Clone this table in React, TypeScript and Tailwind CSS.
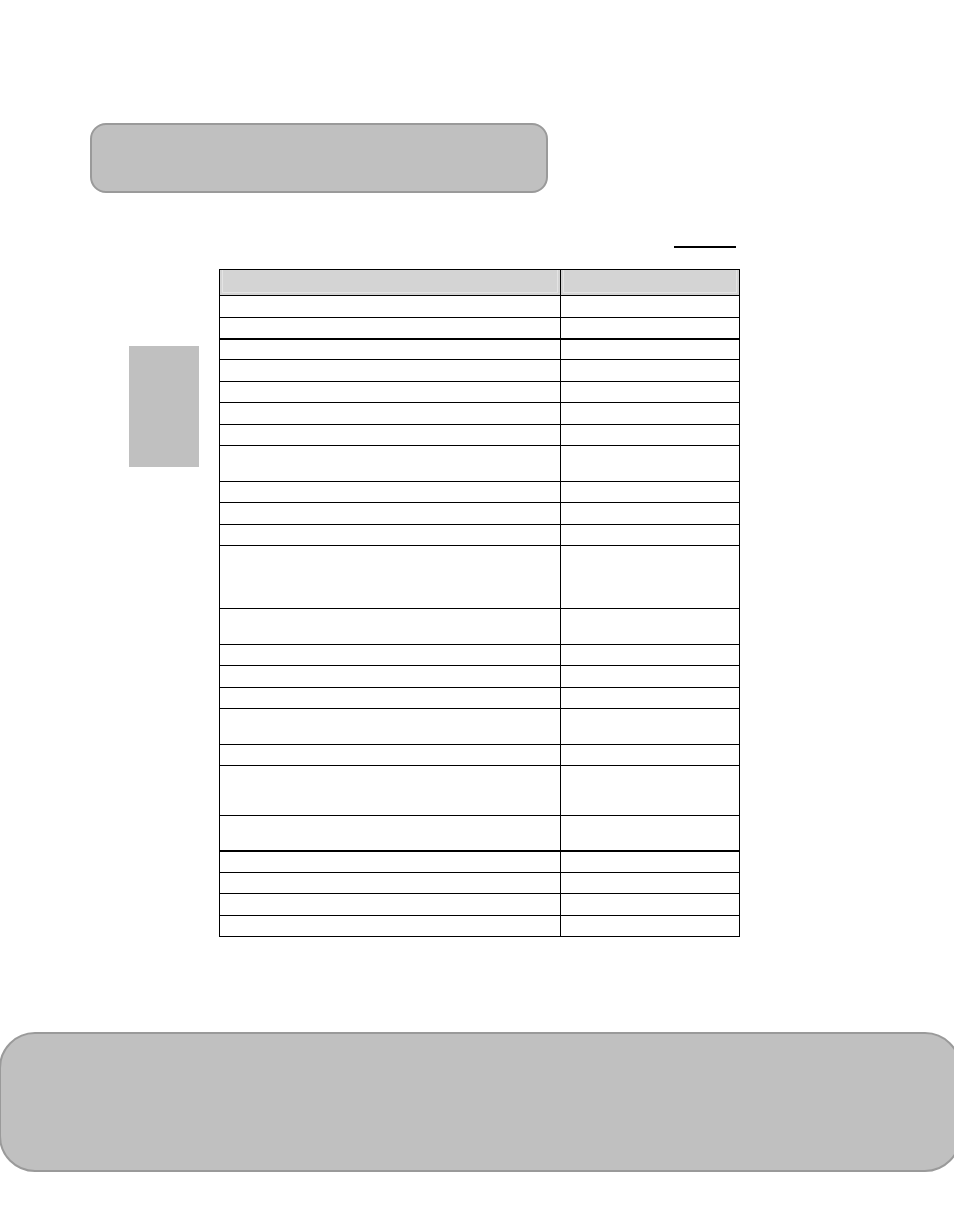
const rows = [
  22, 21, 21, 22, 21, 22, 21, 36, 21, 22, 21, 63, 36, 21, 22, 21, 36, 21, 50,
  35, 22, 21, 22, 21,
];

// rows whose top rule is drawn heavier
const thick = [2, 20];

export default function App() {
  return (
    <div className="w-[954px] h-[1226px] overflow-hidden bg-white flex flex-col font-['Liberation_Sans',sans-serif]">
      <div className="pt-[123px] pl-[90px]">
        <div className="w-[458px] h-[70px] rounded-[16px] border-2 border-[#9a9a9a] bg-[#c0c0c0]" />
      </div>

      <div className="mt-[53px] ml-[674px] w-[62px] h-[2px] bg-black" />

      <div className="mt-[21px] flex items-start">
        <div className="ml-[129px] mt-[77px] w-[70px] h-[121px] bg-[#c0c0c0]" />
        <div className="ml-[20px] w-[521px] border border-black">
          <div className="flex h-[25px]">
            <div className="w-[341px] border-r border-black bg-[#d4d4d4] px-[2px] pb-[2px]">
              <div className="h-full border-x border-b border-[#e4e4e4]" />
            </div>
            <div className="flex-1 bg-[#d4d4d4] px-[2px] pb-[2px]">
              <div className="h-full border-x border-b border-[#e4e4e4]" />
            </div>
          </div>
          {rows.map((h, i) => (
            <div
              key={i}
              className={
                thick.includes(i)
                  ? "flex border-t-2 border-black"
                  : "flex border-t border-black"
              }
              style={{ height: h }}
            >
              <div className="w-[341px] border-r border-black" />
              <div className="flex-1" />
            </div>
          ))}
        </div>
      </div>

      <div className="mt-[95px] -ml-[1px]">
        <div className="w-[962px] h-[140px] rounded-[36px] border-2 border-[#9a9a9a] bg-[#c0c0c0]" />
      </div>
    </div>
  );
}
